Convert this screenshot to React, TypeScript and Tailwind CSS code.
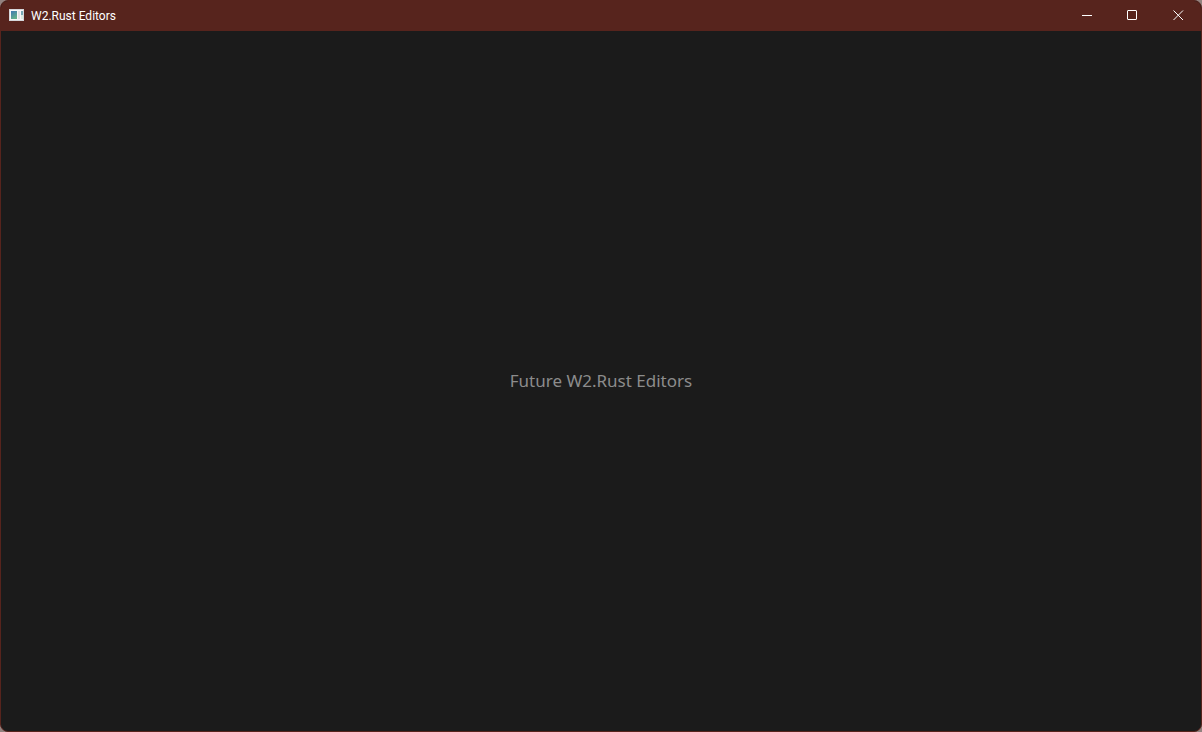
import React from "react";

function AppIcon() {
  return (
    <svg width="16" height="16" viewBox="0 0 16 16" aria-hidden="true">
      <defs>
        <linearGradient id="pane" x1="0" y1="0" x2="0.5" y2="1">
          <stop offset="0" stopColor="#3f78b4" />
          <stop offset="1" stopColor="#63b08a" />
        </linearGradient>
      </defs>
      <rect x="1" y="1" width="15" height="12" fill="#d5d7da" />
      <rect x="2" y="2" width="13" height="10" fill="#f7f7f8" />
      <rect x="3" y="3" width="6" height="8" fill="url(#pane)" />
      <rect x="10" y="3" width="2" height="8" fill="#e2e2e4" />
      <rect x="13" y="3" width="2" height="4" fill="#76a8b4" />
      <rect x="13" y="7" width="2" height="4" fill="#dcebdf" />
    </svg>
  );
}

type ControlProps = { label: string; children: React.ReactNode };

function WindowControl({ label, children }: ControlProps) {
  return (
    <button
      type="button"
      aria-label={label}
      className="flex h-full w-[46px] items-center justify-center text-white hover:bg-white/10"
    >
      <svg width="12" height="12" viewBox="0 0 12 12" fill="none" stroke="currentColor" aria-hidden="true">
        {children}
      </svg>
    </button>
  );
}

export default function App() {
  return (
    <div className="h-screen bg-[#92827f]">
      <div className="flex h-full flex-col overflow-hidden rounded-lg border border-[#57241d] bg-[#1b1b1b]">
        <header className="flex h-[30px] shrink-0 items-center justify-between bg-[#57241d]">
          <div className="flex items-center gap-[7px] pl-[7px]">
            <AppIcon />
            <h1 className="font-['Roboto','Noto_Sans',sans-serif] text-xs text-white">W2.Rust Editors</h1>
          </div>
          <div className="flex h-full">
            <WindowControl label="Minimize">
              <path d="M2 5.5h10" />
            </WindowControl>
            <WindowControl label="Maximize">
              <rect x="1.5" y="0.5" width="9" height="9" rx="0.5" />
            </WindowControl>
            <WindowControl label="Close">
              <path d="M1.5 0.5l9.5 9.5M11 0.5l-9.5 9.5" />
            </WindowControl>
          </div>
        </header>
        <main className="flex flex-1 items-center justify-center">
          <p className="font-['Noto_Sans','Open_Sans',sans-serif] text-[17px] text-[#8c8c8c]">Future W2.Rust Editors</p>
        </main>
      </div>
    </div>
  );
}
